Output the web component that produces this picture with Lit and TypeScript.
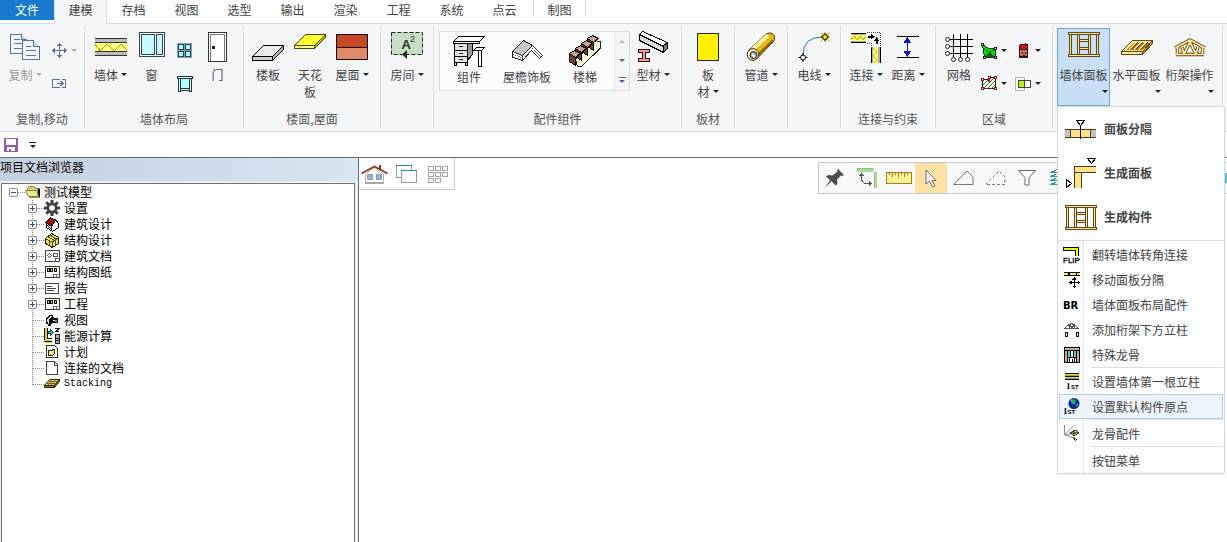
import { LitElement, html, css, svg, nothing } from "lit";
import type { TemplateResult } from "lit";
import { customElement, property, state } from "lit/decorators.js";
import { classMap } from "lit/directives/class-map.js";

type Icon = { w: number; h: number; smooth?: boolean; art: unknown };

const frameArt = svg`
  <g fill="#ffe79c" stroke="#5e4712">
    <path d="M1.5 2.5h2v20h-2zM9.500 2.500h2v20h-2zM20.500 2.500h2v20h-2zM28.500 2.500h2v20h-2z"/>
    <path d="M11.500 7.500h9v2h-9zM11.500 15.500h9v2h-9z"/>
    <path d="M.5 .5h31v2h-31zM.5 22.500h31v2h-31z"/>
  </g>`;

const icons: Record<string, Icon> = {
  copy: { w: 31, h: 27, art: svg`
    <g fill="#f3f8ff" stroke="#5c7397">
      <path d="M.5 .5h11l5 5v14h-16z"/><path d="M11.500 .5v5h5" fill="#c8dcf2"/>
      <path d="M4 5.500h6M4 9.500h8M4 14.500h8"/>
      <path d="M12.500 6.500h11l6 6v13h-17z"/><path d="M23.500 6.500v6h6" fill="#c8dcf2"/>
      <path d="M16 12.500h5M16 16.500h10M16 21.500h10"/></g>` },
  move: { w: 15, h: 15, art: svg`
    <g fill="#5c7397"><path d="M7 1h1v13h-1zM1 7h13v1h-13z"/><path d="M7.500 0l3 3h-6zM7.500 15l3-3h-6zM0 7.500l3-3v6zM15 7.500l-3-3v6z"/></g>` },
  moveTo: { w: 15, h: 11, art: svg`
    <g fill="none" stroke="#5c7397"><path d="M8 1.500h-7.500v8h7.500M10 1.500h3.500v8h-3.500M5 5.500h5M8.500 3l2.500 2.500l-2.500 2.500"/></g>` },
  wall: { w: 32, h: 18, art: svg`
    <path fill="#bdbdbd" d="M0 0h32v18h-32z"/><path fill="#ffff80" d="M0 5h32v8h-32z"/>
    <path stroke="#303030" d="M0 .5h32M0 4.500h32M0 13.500h32M0 17.500h32"/>
    <path fill="none" stroke="#b2a800" d="M0 6l5 7 7-7 7 7 7-7 6 6"/>` },
  window: { w: 26, h: 30, art: svg`
    <path fill="#fff" stroke="#33484c" d="M.5 .5h25v24h-25z"/>
    <path fill="#c5f8ff" stroke="#33484c" d="M2.500 2.500h13v20h-13zM17.500 2.500h6v20h-6z"/>` },
  grid4: { w: 15, h: 15, art: svg`
    <path fill="#8aa3a6" d="M0 0h15v15h-15z"/><path fill="#a8f6ff" stroke="#23494c" d="M1.500 1.500h5v5h-5zM8.500 1.500h5v5h-5zM1.500 8.500h5v5h-5zM8.500 8.500h5v5h-5z"/>` },
  sill: { w: 16, h: 16, art: svg`
    <path fill="#b6fbff" stroke="#18393c" d="M3.500 2.500h9v10h-9z"/><path fill="#f6ffff" stroke="#18393c" d="M.5 .5h15v2h-15z"/>
    <path fill="none" stroke="#18393c" d="M1.500 3v12.500h2v-13M14.500 3v12.500h-2v-13M4 14.500h8"/>` },
  door: { w: 19, h: 31, art: svg`
    <path fill="#fff" stroke="#333" d="M.5 .5h18v29h-18z"/><path fill="#fff" stroke="#777" d="M2.500 29v-26.500h14v26.500"/><path fill="#222" d="M4 14h3v3h-3z"/>` },
  slab: { w: 32, h: 28, art: svg`<g transform="translate(0 12)">
    <path fill="#ececec" stroke="#000" d="M.5 11.500L11.500 .5h20l-11 11z"/><path fill="#b9b9b9" stroke="#000" d="M20.500 11.500L31.500 .5v4l-11 11z"/><path fill="#d2d2d2" stroke="#000" d="M.5 11.500h20v4h-20z"/></g>` },
  ceiling: { w: 32, h: 26, art: svg`
    <path fill="#ffff2b" stroke="#4a4a00" d="M.5 11.500L11.500 .5h20l-11 11z"/><path fill="#c3bd00" stroke="#4a4a00" d="M20.500 11.500L31.500 .5v3l-11 11z"/><path fill="#ffff8a" stroke="#4a4a00" d="M.5 11.500h20v3h-20z"/>` },
  roof: { w: 32, h: 26, art: svg`
    <path fill="#c54923" stroke="#1c0a04" d="M.5 .5h31v13h-31z"/><path fill="#df8c6c" stroke="#1c0a04" d="M.5 13.500h31v12h-31z"/>` },
  room: { w: 32, h: 30, smooth: true, art: svg`
    <path fill="#c6dfc5" d="M0 0h32v23h-32z"/><path fill="none" stroke="#222" stroke-dasharray="4 2" d="M.5 .5h31v22h-31z"/>
    <text x="10.500" y="17" font-size="13" font-weight="700" fill="#253525" font-family="Liberation Sans,sans-serif">A</text>
    <text x="19" y="10" font-size="9" fill="#253525" font-family="Liberation Sans,sans-serif">2</text>
    <path fill="#12321a" d="M11 22.500l5-4.500v9z"/>` },
  desk: { w: 32, h: 31, art: svg`
    <path fill="#999" stroke="#000" d="M14.500 8.500l5-5v15l-5 6z"/>
    <path fill="#e4e4e4" stroke="#000" d="M1.500 7.500h13v19h-13zM1.500 14.500h13M1.500 20.500h13M1.500 26.500v3h2v-3M12.500 26.500v3h2v-3"/>
    <path fill="#fff" stroke="#000" d="M.5 5.500l5-5h26l-5 5v2h-26z"/><path stroke="#000" d="M0 5.500h27"/>
    <path stroke="#222" d="M6 10.500h4M6 17.500h4M6 23.500h4"/>
    <path fill="#fff" stroke="#000" d="M20.500 14.500l3-3h8l-3 3zM25.500 14.500h3v16h-3z"/>` },
  fascia: { w: 32, h: 22, art: svg`
    <path fill="#c7c7c7" stroke="#222" d="M1.500 11.500L12.500 .5l9 5-10 10z"/>
    <path fill="#fff" stroke="#222" d="M1.500 11.500l10 4v5l-10-3.500z"/><path stroke="#777" stroke-dasharray="1 1" d="M2 14l9 4"/>
    <path fill="#fff" stroke="#333" d="M11.500 15.500l10-10 10 10-3 3-8-8-9 10z"/><path stroke="#555" stroke-dasharray="2 1" fill="none" d="M21 8l9 9"/>` },
  stairs: { w: 32, h: 32, art: svg`
    <path fill="#f4f4d8" stroke="#222" d="M6.500 24.500L26.500 5.500l5 1.500v6L12.500 31.500h-4z"/>
    ${[3, 2, 1, 0].map((k) => svg`<g transform="translate(${6 * k} ${-5 * k})">
      <path fill="#66422c" stroke="#000" d="M.5 18.500l6 4v8l-6-4z"/>
      <path fill="#d1a184" stroke="#000" d="M.5 18.500l5-3 6 3-5 4z"/></g>`)}` },
  profile: { w: 31, h: 33, art: svg`
    <path fill="#dadada" stroke="#000" d="M1.500 3.500l24 11v7l-24-12z"/><path fill="#fff" stroke="#000" d="M1.500 3.500l3-3 25 11-4 4z"/><path fill="#777" stroke="#000" d="M25.500 14.500l4-3v6l-4 4z"/>
    <path fill="#f29a96" stroke="#3a1010" d="M.5 18.500h11v3h-4v6h4v3h-11v-3h4v-6h-4z"/>` },
  sheet: { w: 22, h: 29, art: svg`<path fill="#fff200" stroke="#222" d="M.5 .5h21v27h-21z"/>` },
  pipe: { w: 30, h: 30, smooth: true, art: svg`
    <path fill="#e9b71a" stroke="#473400" d="M2 19L20 2Q26-1 28.500 4.500q.5 3-1 5L11.500 26z"/><path stroke="#fff4a3" stroke-width="4" d="M6 18L22 3"/><path stroke="#8a6500" stroke-width="2" d="M12 23L27 8"/>
    <circle cx="7" cy="22.500" r="5.800" fill="#fff9d0" stroke="#302400"/><circle cx="7.500" cy="23" r="3.500" fill="#9b9b9b" stroke="#222"/><path stroke="#fff" stroke-width="2" d="M6 22l3 3"/>` },
  wire: { w: 32, h: 31, smooth: true, art: svg`
    <path fill="none" stroke="#3d6fb8" d="M5 23Q5 5 24 5"/>
    <path stroke="#000" d="M5 21v9M.5 25.500h9M27 .5v9M22.500 5h9"/><path stroke="#d7c900" stroke-width="1.500" d="M23 1l8 8M31 1l-8 8"/>
    <circle cx="5" cy="25.500" r="2.500" fill="#fff" stroke="#000"/><circle cx="27" cy="5" r="2.500" fill="#ffef00" stroke="#000"/>` },
  join: { w: 31, h: 31, art: svg`
    <path fill="#aaa" d="M0 1h15v10h-15zM20 15h10v16h-10z"/><path fill="#ffff7a" d="M0 3h15v6h-15zM22 15h5v16h-5z"/>
    <path stroke="#000" d="M0 1.500h15M0 10.500h15M20.500 15v16M29.500 15v16"/>
    <path fill="none" stroke="#c4b800" d="M0 8l3-4 3 4 3-4 3 4 3-4M22 16l4 4-4 4 4 4-3 3"/>
    <path fill="none" stroke="#444" stroke-dasharray="1 1" d="M16 .5h13.500v14M16 11.500h4.500v4"/>
    <path fill="#000" d="M17 4h3v-2l4 2.500-4 3v-2h-3zM25 12v-3h-2l2.500-4 3 4h-2v3z"/>` },
  distance: { w: 22, h: 23, art: svg`
    <path stroke="#000" d="M0 .5h22M0 21.500h22"/><path stroke="#0a12d2" stroke-width="1" d="M10.500 3v16"/><path fill="#0a12d2" d="M10.500 1l4 6h-8zM10.500 21l4-6h-8z"/>` },
  grid: { w: 28, h: 29, art: svg`
    <path stroke="#000" d="M5 6.500h23M5 13.500h23M5 20.500h23M8.500 1v23M15.500 1v23M22.500 1v23"/>
    <g fill="#fff" stroke="#222" shape-rendering="auto"><circle cx="2.500" cy="6.500" r="2"/><circle cx="2.500" cy="13.500" r="2"/><circle cx="2.500" cy="20.500" r="2"/><circle cx="8.500" cy="26.500" r="2"/><circle cx="15.500" cy="26.500" r="2"/><circle cx="22.500" cy="26.500" r="2"/></g>` },
  region: { w: 16, h: 16, art: svg`
    <path fill="#14d21b" stroke="#053d07" d="M1.500 1.500l6 4h7v9h-11z"/><path fill="none" stroke="#0b8c12" d="M14 6L8 10M3 5l5 5"/><path fill="#0c5c10" d="M8 9l5 5h-9z"/>
    <path fill="#fff" stroke="#222" d="M.5 .5h2v2h-2zM13.500 4.500h2v2h-2zM13.500 13.500h2v2h-2zM2.500 13.500h2v2h-2z"/>` },
  house: { w: 9, h: 15, art: svg`
    <path fill="#d26a5e" stroke="#2a0606" d="M.5 6.500h8v7h-8z"/><path fill="#c5191d" stroke="#3c0608" d="M1.500 1.500h7v5h-8v-4z"/><path fill="#222" d="M6 0h1v2h-1zM3 9h1v2h-1zM6 9h1v2h-1zM4 12h2v2h-2zM0 14h9v1h-9z"/>` },
  hatch: { w: 16, h: 15, art: svg`
    <path fill="#fff" stroke="#222" d="M1.500 3.500h6v-2h7v11h-13z"/><path stroke="#12871b" d="M2 9l5-5M2 13L13 2M6 13l8-8M10 13l4-4"/>
    <path fill="#fff" stroke="#a31313" d="M.5 2.500h2v2h-2zM7.500 .5h2v2h-2zM13.500 .5h2v2h-2zM13.500 11.500h2v2h-2zM.5 11.500h2v2h-2zM7.500 3.500h1v2h-1z"/>` },
  overlap: { w: 17, h: 14, art: svg`
    <path fill="none" stroke="#b8b8b8" d="M.5 .5h9v13h-9z"/><path fill="#fff" stroke="#444" d="M3.500 3.500h12v7h-12z"/><path fill="#b4f01f" stroke="#444" d="M3.500 3.500h6v7h-6z"/>` },
  frame: { w: 32, h: 25, art: frameArt },
  wallPanel: { w: 32, h: 30, art: frameArt },
  floorPanel: { w: 32, h: 15, art: svg`
    <path fill="#ffe79c" stroke="#5e4712" d="M.5 11.500L11.500 .5h20l-10 11z"/><path fill="#b7740f" d="M5 10L12.500 2.500h16L21 10z"/>
    <path stroke="#ffe79c" stroke-width="2" d="M8 10l8-8M13 10l8-8M18 10l8-8"/><path stroke="#5e4712" d="M9 10l8-8M14 10l8-8M19 10l8-8"/>
    <path fill="#ffe79c" stroke="#5e4712" d="M.5 11.500h21v3h-21z"/><path fill="#c98b1d" stroke="#5e4712" d="M21.500 11.500l10-11v3l-10 11z"/>` },
  truss: { w: 32, h: 19, smooth: true, art: svg`
    <path fill="none" stroke="#5e4712" stroke-width="3.500" d="M1 10L16 2l15 8M3.500 8v9M28.500 8v9M2 16.500h28M10 16l6-12 6 12M10 16l-2-7M22 16l2-7"/>
    <path fill="none" stroke="#ffe79c" stroke-width="1.700" d="M1 10L16 2l15 8M3.500 8v9M28.500 8v9M2 16.500h28M10 16l6-12 6 12M10 16l-2-7M22 16l2-7"/>` },
  split: { w: 32, h: 19, art: svg`
    <path fill="#c2c2c2" d="M0 9h31v9h-31z"/><path fill="#ffe18a" d="M5 9h21v9h-21z"/><path fill="none" stroke="#4c3a10" d="M0 9.500h31M0 17.500h31M5.500 9v9M25.500 9v9"/>
    <path stroke="#000" d="M15.500 5v14"/><path fill="#fff" stroke="#000" d="M11.500 .5h8l-4 5z"/>` },
  corner: { w: 32, h: 30, art: svg`
    <path fill="#ffe18a" d="M9 8h22v7h-15v15h-7z"/><path fill="none" stroke="#4c3a10" d="M31 8.500h-21.500v21.500M31 14.500h-21.500M16.500 15v15"/>
    <path fill="#fff" stroke="#000" d="M22.500 .5h8l-4 5zM1.500 21.500v8l5-4z"/>` },
  flip: { w: 17, h: 18, art: svg`
    <path fill="#fff200" stroke="#000" d="M.5 1.500h15v9h-3v-6h-12z"/><path fill="#fcfdff" d="M0 10h17v8h-17z"/>
    <text x="0" y="17" font-size="8" fill="#000" stroke="#000" stroke-width=".3" font-family="Liberation Sans,sans-serif">FLIP</text>` },
  shift: { w: 16, h: 16, art: svg`
    <path fill="#fff200" stroke="#000" d="M-.5 .5h17v3h-17z"/><path fill="#000" d="M4 1h2v3h-2zM12 1h1v3h-1z"/><path stroke="#000" fill="none" d="M10.500 6v9M6 10.500h9"/><path fill="#000" d="M10.500 5l2 2.500h-4zM10.500 16l2-2.500h-4zM5 10.500l2.500-2v4zM16 10.500l-2.500-2v4z"/>` },
  br: { w: 17, h: 12, art: svg`<text x="0" y="10" font-size="10" font-weight="700" fill="#000" font-family="DejaVu Sans,sans-serif">BR</text>` },
  posts: { w: 16, h: 14, art: svg`
    <path fill="none" stroke="#555" d="M.5 5.500l3-3 2-1 2-1 2 1 2 1 3 3h-15zM5 5l1-3 2 3 2-3 1 3"/><path fill="#ffe0a0" stroke="#111" d="M1.500 9.500h2v4h-2zM12.500 9.500h2v4h-2z"/>` },
  keel: { w: 16, h: 16, art: svg`
    <path fill="#d8a890" stroke="#000" d="M.5 .5h15v15h-15z"/><path fill="#fff" stroke="#000" d="M3.500 3.500h9v12h-9z"/>
    <path fill="#53d4d6" d="M4 4h2v6h-2zM10 4h2v6h-2z"/><path stroke="#000" fill="none" d="M6.500 4v6M9.500 4v6M4 10.500h8M5.500 11v5M8 12v4M10.500 11v5M0 3.500h16"/>` },
  firstStud: { w: 16, h: 17, art: svg`
    <path stroke="#000" d="M1 .5h14M1 3.500h14M1 6.500h14"/><path stroke="#efe000" d="M1 1.500h14M1 4.500h14"/><path stroke="#000" d="M1 2.500h14M1 5.500h14" opacity=".4"/>
    <text x="2" y="16" font-size="9" font-weight="700" fill="#000" font-family="Liberation Serif,serif">1</text><text x="7" y="16" font-size="6" font-weight="700" fill="#000" font-family="Liberation Sans,sans-serif">ST</text>` },
  origin: { w: 17, h: 17, smooth: true, art: svg`
    <circle cx="11" cy="5.500" r="5.500" fill="#0d1d9e"/><path fill="#27ad63" d="M8 2l4-1 1 3-2 3-3-2zM13 6l2-1v3l-2 1z"/><path fill="#6fa1ff" d="M7 3l2-2v2z"/>
    <text x="0" y="16" font-size="9" font-weight="700" fill="#000" font-family="Liberation Serif,serif">1</text><text x="4.500" y="16" font-size="6" font-weight="700" fill="#000" font-family="Liberation Sans,sans-serif">ST</text>` },
  keelPart: { w: 17, h: 17, smooth: true, art: svg`
    <path fill="none" stroke="#888" d="M1.500 0v10l9-9M1 9l12 5M2 11l13-6"/><path fill="#f2e66c" stroke="#222" stroke-width=".8" d="M7 8l5-3 4 3-5 3z"/><path fill="none" stroke="#111" d="M7 8h9M11 5v6M11 12v2q1 3 3 0"/>` },
  folder: { w: 16, h: 12, smooth: true, art: svg`
    <path fill="#d8d266" stroke="#77773a" d="M2.500 4v-1.500l2-2h4l2 2h3v3"/><path fill="#111" d="M13 2.500h2v9h-11v-1h8z"/><path fill="#f0ea8c" stroke="#85853a" d="M.5 4.500h11l2 6h-10z"/>` },
  gear: { w: 16, h: 16, smooth: true, art: svg`
    <g stroke="#404040" stroke-width="3"><path d="M8 0v16M0 8h16M2.300 2.300l11.400 11.400M13.700 2.300L2.300 13.700"/></g><circle cx="8" cy="8" r="5.500" fill="#404040"/><circle cx="8" cy="8" r="2.800" fill="#fff"/>` },
  archHouse: { w: 14, h: 15, art: svg`
    <path fill="#fff" stroke="#111" d="M1.500 7.500l5 5v-6l4-4 3 4v4l-6 4-6-4z"/><path fill="#9a0a12" stroke="#250204" d="M.5 5.500l5-5 5 3-4 6z"/>` },
  structHouse: { w: 14, h: 15, art: svg`
    <path fill="#e5de78" stroke="#222200" d="M.5 5.500l6-5 7 4v6l-6 4-7-4z"/><path fill="none" stroke="#57520e" d="M1 6l6 3v5M7 9l6-4M3 4l6 3M4 8v4M10 7v5M5 2l6 4"/>` },
  archDoc: { w: 15, h: 12, art: svg`
    <path fill="#fff" stroke="#444" d="M.5 .5h14v11h-14z"/><path fill="none" stroke="#555" d="M2.500 5.500l2-2 2 2-2 2zM8.500 3.500h4v3h-4zM10.500 8.500v3M10 8.500h4"/>` },
  structDoc: { w: 15, h: 12, art: svg`
    <path fill="#fff" stroke="#333" d="M.5 .5h14v11h-14z"/><path fill="#ddd39a" stroke="#111" d="M2.500 2.500h2v3h-2zM5.500 2.500h2v3h-2zM9.500 2.500h2v3h-2z"/><path fill="none" stroke="#777" d="M8.500 11v-3h6M11.500 8v3"/>` },
  report: { w: 14, h: 11, art: svg`
    <path fill="#fff" stroke="#444" d="M.5 .5h13v10h-13z"/><path stroke="#444" d="M2 3.500h5M2 5.500h9M2 7.500h7"/>` },
  camera: { w: 14, h: 12, art: svg`
    <path fill="#111" d="M4 1h4l1 3h4v5h-6l-1 3h-3v-2h-2v-6z"/><path fill="#ddd" d="M2 5l3-3h2l-3 3v5h-1z"/><path fill="#fff" d="M8 6h2v1h-2z"/><path fill="#777" d="M10 6h2v2h-2z"/>` },
  energy: { w: 16, h: 16, art: svg`
    <path fill="#e4d024" d="M1 0h2v12h5v3h-7z"/><path stroke="#111" fill="none" d="M.5 0v12M3.500 0v10.500h4M0 13.500h8"/><path fill="#12c5d5" stroke="#0b5560" d="M4.500 3.500h2v-2l3 3-3 3v-2h-2z"/>
    <path fill="#a7b8a7" stroke="#222" d="M11.500 6.500h4v9h-4z"/><path stroke="#222" fill="none" d="M11 .5h4l-3 3h3M12 10.500h3M12 12.500h3"/>` },
  plan: { w: 12, h: 14, art: svg`
    <path fill="#fff" stroke="#333" d="M.5 .5h8l3 3v9h-11z"/><path fill="#fff06a" stroke="#222" d="M2.500 5.500h4v-1h2v4l-2 2h-4z"/>` },
  page: { w: 12, h: 14, art: svg`<path fill="#fff" stroke="#444" d="M.5 .5h8l3 3v10h-11z"/><path fill="none" stroke="#444" d="M8.500 1v3h3"/>` },
  stack: { w: 16, h: 10, smooth: true, art: svg`
    <path fill="#e0d27a" stroke="#2b2600" d="M.5 6.500l5-6h10l-5 6z"/><path fill="#8e7f22" stroke="#2b2600" d="M.5 6.500h10v2h-10zM10.500 6.500l5-6v2l-5 6z"/><path stroke="#655809" stroke-width=".8" d="M4 6l4-5M7 6l4-5M3 4.500h9M4.500 2.500h9"/>` },
  save: { w: 14, h: 14, art: svg`
    <path fill="#8b5fae" d="M0 0h14v14h-14z"/><path fill="#fff" d="M2 1h10v6h-10zM3 9h8v4h-8z"/><path fill="#8b5fae" d="M5 11h2v2h-2z"/>` },
  home: { w: 27, h: 19, smooth: true, art: svg`
    <path fill="#fffdf8" stroke="#b4b0aa" d="M4.500 9L13.500 2.500 22.500 9v9h-18z"/><path fill="#a9a9a9" d="M4 17h19v2h-19z"/><path fill="#98b4dd" stroke="#8d99aa" d="M6.500 9.500h5v5h-5zM15.500 9.500h5v5h-5z"/>
    <path fill="none" stroke="#8f3425" stroke-width="1.600" d="M.5 8.500L13.500 1.500 26.500 8.500"/><path fill="#8f3425" d="M18 0h2v4h-2z"/>` },
  cascade: { w: 21, h: 18, art: svg`
    <path fill="#fff" stroke="#999" d="M.5 .5h15v12h-15z"/><path fill="#2f8f80" d="M0 0h16v1h-16z"/><path fill="#fff" stroke="#999" d="M5.500 5.500h15v12h-15z"/><path fill="#2f8f80" d="M5 5h16v1h-16z"/>` },
  tiles: { w: 20, h: 17, art: svg`
    <path fill="none" stroke="#a5a5a5" d="M.5 .5h5v4h-5zM7.500 .5h5v4h-5zM14.500 .5h5v4h-5zM.5 6.500h5v4h-5zM7.500 6.500h5v4h-5zM14.500 6.500h5v4h-5zM.5 12.500h5v4h-5zM7.500 12.500h5v4h-5z"/>` },
  pin: { w: 20, h: 19, smooth: true, art: svg`
    <path fill="#4d4d4d" d="M13 0l6 6-2 1-1-.5-4 4 .5 4.500-2 1.500-4-4.500L0 19l5-8-4-3.500 2-1.500 4.500.5 5-4-.5-1z"/>` },
  turn: { w: 20, h: 20, art: svg`
    <path fill="#a8dc93" stroke="#76ac66" stroke-width=".5" d="M0 0h16v3h-16zM17 4h3v16h-3z"/><path fill="none" stroke="#555" d="M4.500 7v5l3 3.500h5"/><path fill="#555" d="M4.500 5l2.500 3h-5zM15 15.500l-3-2.500v5z"/>` },
  ruler: { w: 27, h: 12, art: svg`
    <path fill="#fff493" stroke="#a8791d" d="M.5 .5h25v11h-25z"/><path stroke="#a8791d" d="M3.500 0v3M6.500 0v5M9.500 0v3M12.500 0v5M15.500 0v3M18.500 0v5M21.500 0v3"/>` },
  pointer: { w: 12, h: 19, smooth: true, art: svg`<path fill="#fff" stroke="#666" d="M1 1v14l3.500-3 3 6 2.500-1-3-5.500h4z"/>` },
  shape: { w: 21, h: 16, smooth: true, art: svg`<path fill="none" stroke="#777" d="M.5 14.500L14 1l6 6v7.500z"/>` },
  shapeDash: { w: 21, h: 16, smooth: true, art: svg`<path fill="none" stroke="#777" stroke-dasharray="3 2" d="M.5 14.500L14 1l6 6v7.500z"/>` },
  filter: { w: 18, h: 16, smooth: true, art: svg`<path fill="#fff" stroke="#666" d="M.5 .5h17l-6.500 7v7.500h-4v-7.500z"/>` },
  layers: { w: 20, h: 18, art: svg`<path fill="none" stroke="#2b9ba2" d="M7 .5h12M1 3.500l6-2M3 3.500h17M1 7.500l6-2M3 7.500h17M1 11.500l6-2M3 11.500h17M1 15.500l6-2M3 15.500h17"/>` },
  sphere: { w: 12, h: 12, smooth: true, art: svg`<circle cx="6" cy="6" r="6" fill="#5bb9cf"/>` },
};

const icon = (name: string): TemplateResult => {
  const i = icons[name];
  return html`<svg width=${i.w} height=${i.h} viewBox="0 0 ${i.w} ${i.h}" fill="none" aria-hidden="true"
    shape-rendering=${i.smooth ? "auto" : "crispEdges"}>${i.art}</svg>`;
};

const base = css`
  * { box-sizing: border-box; }
  svg { display: block; flex: none; }
  button {
    font: inherit; color: inherit; background: none; border: 0; margin: 0; padding: 0;
    display: flex; align-items: center; justify-content: center; cursor: default;
  }
`;

/** Large ribbon button: picture on top, caption of one or two lines below. */
@customElement("ribbon-button")
class RibbonButton extends LitElement {
  @property() icon = "";
  @property() label = "";
  @property({ type: Boolean }) menu = false;
  @property({ type: Boolean }) below = false;
  @property({ type: Boolean, reflect: true }) active = false;
  @property({ type: Boolean, reflect: true }) disabled = false;

  static styles = [base, css`
    :host { display: block; flex: none; width: 42px; }
    :host([disabled]) { color: #9a9a9a; }
    button { flex-direction: column; justify-content: flex-start; width: 100%; height: 78px; }
    .pic { height: 38px; display: flex; align-items: center; }
    .line { display: flex; align-items: center; gap: 3px; line-height: 17px; white-space: nowrap; }
    .caret { border: 3px solid transparent; border-top-color: #222; border-bottom: 0; }
    :host([disabled]) .caret { border-top-color: #aaa; }
    .end { align-self: flex-end; height: 17px; padding-right: 2px; }
    :host([active]) button { background: #c9dff5; box-shadow: inset 0 0 0 1px #6ba5d7; }
  `];

  render() {
    const lines = this.label.split("|");
    const caret = html`<span class="caret"></span>`;
    return html`<button ?disabled=${this.disabled}>
      <span class="pic">${icon(this.icon)}</span>
      ${lines.map((l, n) => html`<span class="line">${l}${this.menu && !this.below && n === lines.length - 1 ? caret : nothing}</span>`)}
      ${this.below ? html`<span class="line end">${caret}</span>` : nothing}
    </button>`;
  }
}

type Small = { icon: string; name: string; menu?: boolean; off?: boolean };
type Entry = { icon?: string; text: string; rule?: boolean; hot?: boolean };
type Node = { icon: string; text: string; open?: boolean };

@customElement("app-root")
class AppRoot extends LitElement {
  @state() private tab = "建模";

  private tabs = ["建模", "存档", "视图", "选型", "输出", "渲染", "工程", "系统", "点云", "制图"];

  private tree: Node[] = [
    { icon: "gear", text: "设置", open: false },
    { icon: "archHouse", text: "建筑设计", open: false },
    { icon: "structHouse", text: "结构设计", open: false },
    { icon: "archDoc", text: "建筑文档", open: false },
    { icon: "structDoc", text: "结构图纸", open: false },
    { icon: "report", text: "报告", open: false },
    { icon: "structDoc", text: "工程", open: false },
    { icon: "camera", text: "视图" },
    { icon: "energy", text: "能源计算" },
    { icon: "plan", text: "计划" },
    { icon: "page", text: "连接的文档" },
    { icon: "stack", text: "Stacking" },
  ];

  private bigEntries: Entry[] = [
    { icon: "split", text: "面板分隔" },
    { icon: "corner", text: "生成面板" },
    { icon: "frame", text: "生成构件" },
  ];

  private entries: Entry[] = [
    { icon: "flip", text: "翻转墙体转角连接" },
    { icon: "shift", text: "移动面板分隔" },
    { icon: "br", text: "墙体面板布局配件" },
    { icon: "posts", text: "添加桁架下方立柱" },
    { icon: "keel", text: "特殊龙骨" },
    { icon: "firstStud", text: "设置墙体第一根立柱", rule: true },
    { icon: "origin", text: "设置默认构件原点", hot: true },
    { icon: "keelPart", text: "龙骨配件", rule: true },
    { text: "按钮菜单", rule: true },
  ];

  static styles = [base, css`
    :host {
      display: flex; flex-direction: column; height: 100vh; overflow: hidden; background: #fff; color: #444;
      font: 12px/16px "Noto Sans CJK SC", sans-serif;
    }
    .tabs { display: flex; height: 24px; flex: none; border-bottom: 1px solid #d8dbdf; }
    .tabs button { width: 53px; height: 20px; line-height: 20px; }
    .tabs .file { width: 54px; background: #1979ca; color: #fff; }
    .tabs .on { height: 24px; padding-bottom: 4px; background: #f4f6f8; border: solid #d8dbdf; border-width: 0 1px; }
    .tabs .last { margin-left: 2px; border: solid #d8dbdf; border-width: 0 1px; height: 16px; padding-top: 4px; }

    .ribbon { display: flex; flex: none; height: 108px; background: #f4f6f8; border-bottom: 1px solid #d8dbdf; position: relative; z-index: 2; }
    .group { display: flex; flex-direction: column; flex: none; margin: 2px 0 3px; border-right: 1px solid #dcdfe2; }
    .group .items { display: flex; padding-top: 2px; height: 84px; }
    .group h2 { margin: 0; font: inherit; line-height: 18px; text-align: center; color: #555; }
    .p2 { padding: 0 4px 0 2px; }
    .p3 { padding: 0 7px 0 3px; }
    .p4 { padding: 0 6px 0 4px; }
    .p5 { padding: 0 5px; }
    .w50 { width: 50px; }
    .w52 { width: 52px; }
    .w53 { width: 53px; }
    .w46 { width: 46px; }
    .w41 { width: 41px; }
    .smalls { display: flex; flex-direction: column; padding-top: 6px; }
    .smalls button { height: 33px; width: 34px; gap: 3px; justify-content: flex-start; }
    .smalls .narrow { width: 25px; justify-content: center; }
    .smalls .pic { width: 18px; display: flex; justify-content: center; }
    .caret { border: 3px solid transparent; border-top-color: #222; border-bottom: 0; }
    .off .caret { border-top-color: #aaa; }

    .gallery { display: flex; margin-top: 3px; height: 60px; border: 1px solid #d8dbdf; background: #fbfcfe; }
    .gallery .cell { flex-direction: column; justify-content: flex-start; width: 58px; padding-top: 2px; white-space: nowrap; line-height: 17px; }
    .gallery .cell .pic { height: 34px; display: flex; align-items: center; }
    .scroll { display: flex; flex-direction: column; width: 15px; background: #f4f6f8; border-left: 1px solid #e4e7ea; }
    .scroll button { flex: 1; flex-direction: column; gap: 2px; }
    .scroll .up { border: 3px solid transparent; border-bottom-color: #b3b8c0; border-top: 0; }
    .scroll .down { border: 3px solid transparent; border-top-color: #4a6484; border-bottom: 0; }
    .bar { width: 7px; height: 1px; background: #4a6484; }

    .anchor { position: relative; }
    .menu {
      position: absolute; top: 78px; left: 0; width: 168px; background: #fcfdff; border: 1px solid #d5d8dc;
      border-radius: 2px; display: flex; flex-direction: column; box-shadow: 0 1px 2px rgba(0, 0, 0, .06);
    }
    .menu button { justify-content: flex-start; text-align: left; }
    .menu .big { height: 44px; padding-left: 7px; gap: 7px; font-weight: 700; }
    .menu .big .pic { width: 32px; }
    .menu .list { display: flex; flex-direction: column; margin-top: 1px; padding: 1px 0 0; border-top: 1px solid #dcdfe2;
      background: linear-gradient(#e2e4e7, #e2e4e7) 25px 0 / 1px 100% no-repeat; }
    .menu .small { height: 25px; padding-left: 1px; margin: 0 1px; }
    .menu .small .pic { width: 23px; display: flex; justify-content: center; }
    .menu .small .txt { padding-left: 9px; }
    .menu .hot { background: #eef4fc; box-shadow: inset 0 0 0 1px #b4cde8; }
    .menu hr { margin: 0 1px 1px 33px; border: 0; height: 1px; background: #dcdfe2; }

    .quick { display: flex; align-items: center; flex: none; height: 25px; padding-left: 4px; gap: 11px; }
    .quick button { flex-direction: column; gap: 2px; }
    .quick .bar { background: #222; }
    .work { display: flex; flex: 1; min-height: 0; border-top: 1px solid #6a6a6a; }
    aside { display: flex; flex-direction: column; flex: none; width: 358px; background: #f0f0f0; color: #000; }
    aside h1 { margin: 0; font: inherit; line-height: 17px; height: 23px; background: linear-gradient(90deg, #c3d0e0, #d8e6f4); }
    .box { flex: 1; margin: 2px 3px 0 1px; background: #fff; border: solid #707070; border-width: 1px 1px 0; }
    ul { list-style: none; margin: 0; padding: 0; }
    .row { display: flex; align-items: center; height: 16px; line-height: 16px; white-space: nowrap; }
    .row .pic { width: 16px; display: flex; justify-content: center; flex: none; }
    .row .txt { padding-left: 4px; }
    .latin { font: 10px/16px "Liberation Mono", monospace; }
    .root { padding-left: 7px; }
    .root .txt { background: #efefef; margin-left: 1px; padding: 0 2px; }
    .exp { width: 9px; height: 9px; flex: none; border: 1px solid #919191; border-radius: 1px; background:
      linear-gradient(#2f4f8f, #2f4f8f) center / 5px 1px no-repeat, linear-gradient(#2f4f8f, #2f4f8f) center / 1px 5px no-repeat, #fff; }
    .exp.minus { background: linear-gradient(#2f4f8f, #2f4f8f) center / 5px 1px no-repeat, #fff; }
    .dots { height: 1px; flex: none; width: 7px; background: repeating-linear-gradient(90deg, #888 0 1px, transparent 1px 2px); }
    .dots.long { width: 11px; }
    .kids { margin-left: 26px; }
    .kids .row { background: repeating-linear-gradient(#888 0 1px, transparent 1px 2px) 4px 0 / 1px 16px no-repeat; }
    .kids li:last-child .row { background-size: 1px 9px; }
    .leaf { width: 5px; flex: none; }

    main { flex: 1; min-width: 0; border-left: 1px solid #6a6a6a; display: flex; align-items: flex-start; justify-content: space-between; background: #fff; }
    .views { display: flex; height: 32px; width: 96px; border: solid #c9c9c9; border-width: 0 1px 1px 0; }
    .views button { width: 32px; height: 32px; }
    .tools { display: flex; margin-top: 4px; width: 409px; height: 32px; border: 1px solid #c9c9c9; border-right: 0; background: #f8f8f8; overflow: hidden; }
    .tools button { width: 32px; flex: none; height: 30px; }
    .tools .on { background: #ffe1a6; }
    .tools .far { margin-left: auto; width: 9px; }
  `];

  private smallButton(s: Small) {
    return html`<button class=${classMap({ off: !!s.off, narrow: !s.menu && !s.off })} aria-label=${s.name} ?disabled=${!!s.off}>
      <span class="pic">${icon(s.icon)}</span>${s.menu ? html`<span class="caret"></span>` : nothing}</button>`;
  }

  private group(pad: string, title: string, items: unknown) {
    return html`<section class="group"><div class="items ${pad}">${items}</div>${title ? html`<h2>${title}</h2>` : nothing}</section>`;
  }

  private cell(pic: string, text: string) {
    return html`<button class="cell"><span class="pic">${icon(pic)}</span>${text}</button>`;
  }

  private menu() {
    return html`<div class="menu" role="menu">
      ${this.bigEntries.map((e) => html`<button class="big" role="menuitem"><span class="pic">${icon(e.icon!)}</span>${e.text}</button>`)}
      <div class="list">
        ${this.entries.map((e) => html`${e.rule ? html`<hr />` : nothing}
          <button class=${classMap({ small: true, hot: !!e.hot })} role="menuitem">
            <span class="pic">${e.icon ? icon(e.icon) : nothing}</span><span class="txt">${e.text}</span></button>`)}
      </div>
    </div>`;
  }

  render() {
    return html`
      <nav class="tabs">
        <button class="file">文件</button>
        ${this.tabs.map((t) => html`<button class=${classMap({ on: t === this.tab, last: t === "制图" })} @click=${() => (this.tab = t)}>${t}</button>`)}
      </nav>
      <div class="ribbon">
        ${this.group("", "复制,移动", html`
          <ribbon-button class="w50" icon="copy" label="复制" menu disabled></ribbon-button>
          <div class="smalls">
            ${this.smallButton({ icon: "move", name: "移动", menu: true, off: true })}
            ${this.smallButton({ icon: "moveTo", name: "移动到", off: true })}
          </div>`)}
        ${this.group("p5", "墙体布局", html`
          <ribbon-button class="w41" icon="wall" label="墙体" menu></ribbon-button>
          <ribbon-button class="w41" icon="window" label="窗"></ribbon-button>
          <div class="smalls">
            ${this.smallButton({ icon: "grid4", name: "窗格" })}
            ${this.smallButton({ icon: "sill", name: "窗套" })}
          </div>
          <ribbon-button class="w41" icon="door" label="门"></ribbon-button>`)}
        ${this.group("p3", "楼面,屋面", html`
          <ribbon-button icon="slab" label="楼板"></ribbon-button>
          <ribbon-button icon="ceiling" label="天花|板"></ribbon-button>
          <ribbon-button icon="roof" label="屋面" menu></ribbon-button>`)}
        ${this.group("", "", html`<ribbon-button class="w52" icon="room" label="房间" menu></ribbon-button>`)}
        ${this.group("p5", "配件组件", html`
          <div class="gallery">
            ${this.cell("desk", "组件")}${this.cell("fascia", "屋檐饰板")}${this.cell("stairs", "楼梯")}
            <div class="scroll">
              <button aria-label="上一行"><span class="up"></span></button>
              <button aria-label="下一行"><span class="down"></span></button>
              <button aria-label="更多"><span class="bar"></span><span class="down"></span></button>
            </div>
          </div>
          <ribbon-button class="w46" icon="profile" label="型材" menu></ribbon-button>`)}
        ${this.group("", "板材", html`<ribbon-button class="w52" icon="sheet" label="板|材" menu></ribbon-button>`)}
        ${this.group("", "", html`<ribbon-button class="w52" icon="pipe" label="管道" menu></ribbon-button>`)}
        ${this.group("", "", html`<ribbon-button class="w52" icon="wire" label="电线" menu></ribbon-button>`)}
        ${this.group("p4", "连接与约束", html`
          <ribbon-button icon="join" label="连接" menu></ribbon-button>
          <ribbon-button icon="distance" label="距离" menu></ribbon-button>`)}
        ${this.group("p2", "区域", html`
          <ribbon-button icon="grid" label="网格"></ribbon-button>
          <div class="smalls">
            ${this.smallButton({ icon: "region", name: "区域", menu: true })}
            ${this.smallButton({ icon: "hatch", name: "填充", menu: true })}
          </div>
          <div class="smalls">
            ${this.smallButton({ icon: "house", name: "建筑", menu: true })}
            ${this.smallButton({ icon: "overlap", name: "重叠", menu: true })}
          </div>`)}
        ${this.group("p4", "", html`
          <div class="anchor"><ribbon-button class="w53" icon="wallPanel" label="墙体面板" menu below active></ribbon-button>${this.menu()}</div>
          <ribbon-button class="w53" icon="floorPanel" label="水平面板" menu below></ribbon-button>
          <ribbon-button class="w53" icon="truss" label="桁架操作" menu below></ribbon-button>`)}
      </div>
      <div class="quick">
        <button aria-label="保存">${icon("save")}</button>
        <button aria-label="自定义快速访问工具栏"><span class="bar"></span><span class="caret"></span></button>
      </div>
      <div class="work">
        <aside>
          <h1>项目文档浏览器</h1>
          <div class="box">
            <div class="row root"><button class="exp minus" aria-label="折叠"></button><span class="dots"></span><span class="pic">${icon("folder")}</span><span class="txt">测试模型</span></div>
            <ul class="kids">
              ${this.tree.map((n) => html`<li><div class="row">
                ${n.open === false
                  ? html`<button class="exp" aria-label="展开"></button><span class="dots"></span>`
                  : html`<span class="leaf"></span><span class="dots long"></span>`}
                <span class="pic">${icon(n.icon)}</span>
                <span class=${classMap({ txt: true, latin: n.text === "Stacking" })}>${n.text}</span>
              </div></li>`)}
            </ul>
          </div>
        </aside>
        <main>
          <div class="views">
            <button aria-label="主视图">${icon("home")}</button>
            <button aria-label="层叠">${icon("cascade")}</button>
            <button aria-label="平铺">${icon("tiles")}</button>
          </div>
          <div class="tools">
            <button aria-label="固定">${icon("pin")}</button>
            <button aria-label="转向">${icon("turn")}</button>
            <button aria-label="测量">${icon("ruler")}</button>
            <button class="on" aria-label="选择">${icon("pointer")}</button>
            <button aria-label="形状">${icon("shape")}</button>
            <button aria-label="虚线形状">${icon("shapeDash")}</button>
            <button aria-label="筛选">${icon("filter")}</button>
            <button aria-label="图层">${icon("layers")}</button>
            <button class="far" aria-label="球体">${icon("sphere")}</button>
          </div>
        </main>
      </div>`;
  }
}
